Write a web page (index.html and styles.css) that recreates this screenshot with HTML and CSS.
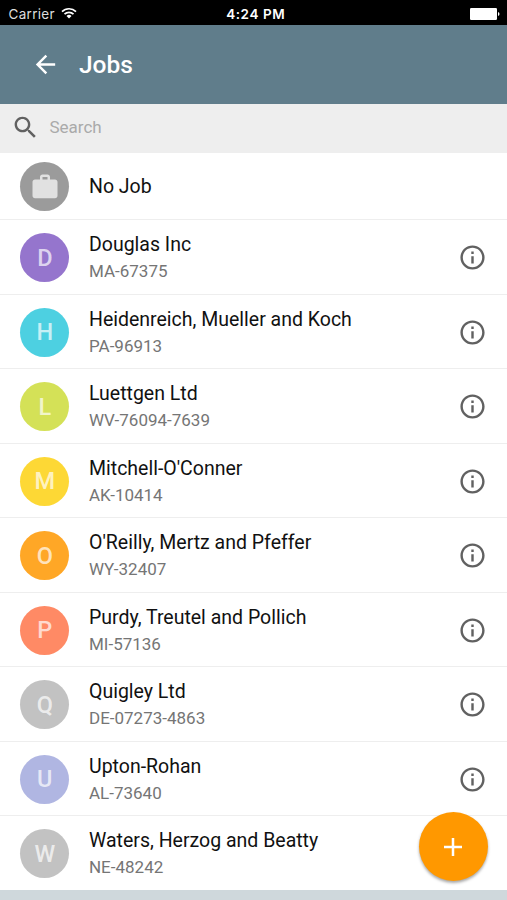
FILE: index.html
```html
<!DOCTYPE html>
<html lang="en">

<head>
    <meta charset="utf-8">
    <title>Jobs</title>
    <link rel="stylesheet" href="styles.css">
</head>

<body>

<svg class="sprite">
    <symbol id="info" viewBox="0 0 24 24">
        <path d="M11 17h2v-6h-2v6zm1-15C6.48 2 2 6.48 2 12s4.48 10 10 10 10-4.48 10-10S17.52 2 12 2zm0 18c-4.41 0-8-3.59-8-8s3.59-8 8-8 8 3.59 8 8-3.59 8-8 8zM11 9h2V7h-2v2z"/>
    </symbol>
</svg>

<div class="status-bar">
    <div class="carrier">
        <span>Carrier</span>
        <svg class="wifi" viewBox="0 0 16 12">
            <path d="M1 4.6a10 10 0 0 1 14 0M3.5 7.2a6.4 6.4 0 0 1 9 0"/>
            <path class="dot" d="M8 11.4L5.5 9a3.6 3.6 0 0 1 5 0z"/>
        </svg>
    </div>
    <div class="time">4:24 PM</div>
    <div class="battery-box">
        <svg class="battery" viewBox="0 0 30 12">
            <rect x="0" y="0" width="27" height="12" rx="1.2"/>
            <path d="M28 4c2 .8 2 3.2 0 4z"/>
        </svg>
    </div>
</div>

<header class="toolbar">
    <svg class="icon back" viewBox="0 0 24 24">
        <path d="M20 11H7.83l5.59-5.59L12 4l-8 8 8 8 1.41-1.41L7.83 13H20v-2z"/>
    </svg>
    <h1>Jobs</h1>
</header>

<div class="search">
    <svg class="icon" viewBox="0 0 24 24">
        <path d="M15.5 14h-.79l-.28-.27C15.41 12.59 16 11.11 16 9.5 16 5.91 13.09 3 9.5 3S3 5.91 3 9.5 5.91 16 9.5 16c1.61 0 3.09-.59 4.23-1.57l.27.28v.79l5 4.99L20.49 19l-4.99-5zm-6 0C7.01 14 5 11.99 5 9.5S7.01 5 9.5 5 14 7.01 14 9.5 11.99 14 9.5 14z"/>
    </svg>
    <span>Search</span>
</div>

<ul class="jobs">
    <li class="no-job">
        <div class="avatar gray">
            <svg class="work" viewBox="0 0 24 24">
                <path d="M20 6h-4V4c0-1.11-.89-2-2-2h-4c-1.11 0-2 .89-2 2v2H4c-1.11 0-1.99.89-1.99 2L2 19c0 1.11.89 2 2 2h16c1.11 0 2-.89 2-2V8c0-1.11-.89-2-2-2zm-6 0h-4V4h4v2z"/>
            </svg>
        </div>
        <div class="text">
            <div class="name">No Job</div>
        </div>
    </li>
    <li>
        <div class="avatar purple">D</div>
        <div class="text">
            <div class="name">Douglas Inc</div>
            <div class="code">MA-67375</div>
        </div>
        <svg class="icon"><use href="#info"/></svg>
    </li>
    <li>
        <div class="avatar cyan">H</div>
        <div class="text">
            <div class="name">Heidenreich, Mueller and Koch</div>
            <div class="code">PA-96913</div>
        </div>
        <svg class="icon"><use href="#info"/></svg>
    </li>
    <li>
        <div class="avatar lime">L</div>
        <div class="text">
            <div class="name">Luettgen Ltd</div>
            <div class="code">WV-76094-7639</div>
        </div>
        <svg class="icon"><use href="#info"/></svg>
    </li>
    <li>
        <div class="avatar yellow">M</div>
        <div class="text">
            <div class="name">Mitchell-O'Conner</div>
            <div class="code">AK-10414</div>
        </div>
        <svg class="icon"><use href="#info"/></svg>
    </li>
    <li>
        <div class="avatar orange">O</div>
        <div class="text">
            <div class="name">O'Reilly, Mertz and Pfeffer</div>
            <div class="code">WY-32407</div>
        </div>
        <svg class="icon"><use href="#info"/></svg>
    </li>
    <li>
        <div class="avatar coral">P</div>
        <div class="text">
            <div class="name">Purdy, Treutel and Pollich</div>
            <div class="code">MI-57136</div>
        </div>
        <svg class="icon"><use href="#info"/></svg>
    </li>
    <li>
        <div class="avatar silver">Q</div>
        <div class="text">
            <div class="name">Quigley Ltd</div>
            <div class="code">DE-07273-4863</div>
        </div>
        <svg class="icon"><use href="#info"/></svg>
    </li>
    <li>
        <div class="avatar indigo">U</div>
        <div class="text">
            <div class="name">Upton-Rohan</div>
            <div class="code">AL-73640</div>
        </div>
        <svg class="icon"><use href="#info"/></svg>
    </li>
    <li>
        <div class="avatar silver">W</div>
        <div class="text">
            <div class="name">Waters, Herzog and Beatty</div>
            <div class="code">NE-48242</div>
        </div>
        <svg class="icon"><use href="#info"/></svg>
    </li>
</ul>

<button class="fab">
    <svg viewBox="0 0 18 18">
        <path d="M9 0v18M0 9h18"/>
    </svg>
</button>

</body>

</html>
```
FILE: styles.css
```css
* {
    box-sizing: border-box;
}

body {
    margin: 0;
    height: 900px;
    overflow: hidden;
    background-color: #cfd8dc;
    font-family: Roboto, "Liberation Sans", sans-serif;
}

.sprite {
    display: none;
}

.icon {
    flex: none;
    width: 29px;
    height: 29px;
    fill: #616161;
}

/* status bar */

.status-bar {
    display: grid;
    grid-template-columns: 1fr auto 1fr;
    align-items: center;
    height: 25px;
    padding: 3px 7px 0 8.5px;
    background-color: #000;
    color: #fff;
    font-family: Inter, "Liberation Sans", sans-serif;
    font-size: 13.5px;
}

.carrier {
    display: flex;
    align-items: center;
    gap: 6px;
    color: #ddd;
    letter-spacing: 0.3px;
}

.wifi {
    width: 16px;
    height: 12px;
    margin-bottom: 3px;
    fill: none;
    stroke: #fff;
    stroke-width: 1.7;
}

.wifi .dot {
    fill: #fff;
    stroke: none;
}

.time {
    margin-left: 3px;
    font-weight: 600;
    letter-spacing: 0.6px;
}

.battery-box {
    display: flex;
    justify-content: flex-end;
}

.battery {
    width: 30px;
    height: 12px;
    fill: #fff;
}

/* toolbar */

.toolbar {
    display: flex;
    align-items: center;
    height: 78.5px;
    padding-left: 30.5px;
    background-color: #607d8b;
    color: #fff;
}

.toolbar .back {
    fill: #fff;
}

.toolbar h1 {
    margin: 0 0 0 19.5px;
    font-size: 24.5px;
    font-weight: 500;
}

.search {
    display: flex;
    align-items: center;
    height: 49px;
    padding: 0 0 2px 10.5px;
    background-color: #eee;
    color: #aaa;
    font-size: 17px;
}

.search span {
    margin-left: 10px;
}

/* list of jobs */

.jobs {
    margin: 0;
    padding: 0;
    list-style: none;
    background-color: #fff;
}

.jobs li {
    display: flex;
    align-items: center;
    height: 74.55px;
    padding: 1.5px 20px 0 20.3px;
    border-bottom: 1px solid #eee;
}

.jobs .no-job {
    height: 67.5px;
}

.jobs li:last-child {
    height: 73.6px;
    border-bottom: none;
}

.avatar {
    display: flex;
    flex: none;
    align-items: center;
    justify-content: center;
    width: 49px;
    height: 49px;
    border-radius: 50%;
    color: rgba(255, 255, 255, 0.7);
    font-size: 23.5px;
    font-weight: 500;
}

.work {
    width: 30px;
    height: 30px;
    fill: #e1e1e1;
}

.text {
    flex: 1;
    margin-left: 19.7px;
}

.name {
    color: #111;
    font-size: 19.5px;
    line-height: 27px;
}

.code {
    color: #757575;
    font-size: 17px;
    line-height: 26px;
}

.gray {
    background-color: #9b9b9b;
}

.purple {
    background-color: #9575cd;
}

.cyan {
    background-color: #4dd0e1;
}

.lime {
    background-color: #d4e157;
}

.yellow {
    background-color: #fdd835;
}

.orange {
    background-color: #ffa726;
}

.coral {
    background-color: #ff8a65;
}

.silver {
    background-color: #c2c2c2;
}

.indigo {
    background-color: #b0b6e2;
}

/* add button */

.fab {
    display: flex;
    position: absolute;
    right: 19.5px;
    bottom: 19px;
    align-items: center;
    justify-content: center;
    width: 69px;
    height: 69px;
    padding: 0;
    border: none;
    border-radius: 50%;
    background-color: #ff9800;
    box-shadow: 0 2px 3px rgba(0, 0, 0, 0.35);
}

.fab svg {
    width: 18px;
    height: 18px;
    fill: none;
    stroke: #fff;
    stroke-width: 2.5;
}
```
